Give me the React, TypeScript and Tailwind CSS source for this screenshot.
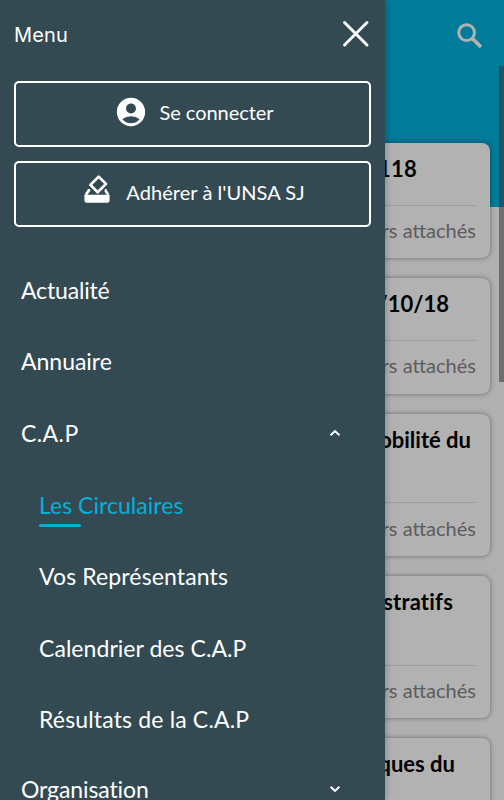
import { MdAccountCircle } from "react-icons/md";

type Card = { title: string; height: string; titleStyle: string };
type Item = { label: string; tracking: string };

const cards: Card[] = [
  { title: "118", height: "h-[115.5px]", titleStyle: "mr-[59px] tracking-[0.2px]" },
  { title: "04/10/18", height: "h-[115.5px]", titleStyle: "mr-[27px]" },
  { title: "mobilité du", height: "h-[142px]", titleStyle: "mr-[5px]" },
  { title: "administratifs", height: "h-[142px]", titleStyle: "mr-[23px] tracking-[0.2px]" },
  { title: "techniques du", height: "h-[142px]", titleStyle: "mr-[21px]" },
];

const topItems: Item[] = [
  { label: "Actualité", tracking: "tracking-[-0.17px]" },
  { label: "Annuaire", tracking: "tracking-[-0.02px]" },
];

const capItems: Item[] = [
  { label: "Les Circulaires", tracking: "tracking-[0.03px]" },
  { label: "Vos Représentants", tracking: "tracking-[0.13px]" },
  { label: "Calendrier des C.A.P", tracking: "tracking-[0.05px]" },
  { label: "Résultats de la C.A.P", tracking: "tracking-[0.16px]" },
];

function BallotIcon() {
  return (
    <svg viewBox="0 0 26 30" className="h-[30px] w-[26px] shrink-0" fill="none" aria-hidden="true">
      <path d="M14.7 2.6 22 9.9 13.7 18.2 6.4 10.9Z" stroke="white" strokeWidth="2.7" strokeLinejoin="round" />
      <path d="M6.2 16.4H4.8L1.9 20.8M20.8 16.4h.6l2.7 4.4" stroke="white" strokeWidth="2.7" />
      <path d="M0.4 20.8h25.2v5.6a2.4 2.4 0 0 1-2.4 2.4H2.8a2.4 2.4 0 0 1-2.4-2.4Z" fill="white" />
    </svg>
  );
}

function SearchIcon() {
  return (
    <svg viewBox="0 0 28 28" className="h-7 w-7" fill="none" stroke="white" aria-hidden="true">
      <circle cx="10.6" cy="10.6" r="7.9" strokeWidth="3" />
      <path d="m16.4 16.4 8.6 8.6" strokeWidth="3.6" />
    </svg>
  );
}

function Caret({ up = false }: { up?: boolean }) {
  return (
    <svg viewBox="0 0 12 8" className={`h-2 w-3 ${up ? "rotate-180" : ""}`} fill="none" aria-hidden="true">
      <path d="m1.6 1.7 4.4 4.2 4.4-4.2" stroke="white" strokeWidth="1.9" />
    </svg>
  );
}

function CircularCard({ title, height, titleStyle }: Card) {
  return (
    <article className={`flex shrink-0 flex-col rounded-lg bg-white px-3.5 pt-3 shadow-[0_0_5px_rgba(0,0,0,0.4)] ${height}`}>
      <h2 className={`text-right text-[22px] leading-7 font-bold whitespace-nowrap text-black ${titleStyle}`}>{title}</h2>
      <p className="mt-auto flex h-[53.5px] items-center justify-end border-t border-[#e4e4e4] pb-1 text-[20px] text-[#858585]">
        fichiers attachés
      </p>
    </article>
  );
}

function Drawer() {
  return (
    <aside className="absolute inset-y-0 left-0 w-[385px] overflow-hidden bg-[#344a53] text-white shadow-[0_0_8px_rgba(0,0,0,0.3)]">
      <header className="flex h-[81px] items-start justify-between pt-5 pr-[15px] pl-3.5">
        <span className="font-['Inter'] text-[20px] leading-[30px] tracking-[0.15px]">Menu</span>
        <button aria-label="Fermer">
          <svg viewBox="0 0 28 28" className="h-7 w-7" fill="none" aria-hidden="true">
            <path d="m2.5 2.5 22.5 22.5M25 2.5 2.5 25" stroke="white" strokeWidth="2.9" strokeLinecap="round" />
          </svg>
        </button>
      </header>

      <div className="flex flex-col gap-3.5 px-3.5 text-[20px]">
        <button className="flex h-[66px] w-[357px] items-center justify-center gap-3 rounded-[5px] border-2 border-white pb-1">
          <MdAccountCircle className="ml-0.5 h-[34px] w-[34px]" />
          <span className="tracking-[-0.05px]">Se connecter</span>
        </button>
        <button className="flex h-[66px] w-[357px] items-center justify-center gap-4 rounded-[5px] border-2 border-white pb-1 pl-1">
          <span className="-mt-1.5">
            <BallotIcon />
          </span>
          <span className="tracking-[0.06px]">Adhérer à l'UNSA SJ</span>
        </button>
      </div>

      <nav className="mt-[27.7px] pl-[21px] text-[23px]">
        {topItems.map((item) => (
          <div key={item.label} className={`flex h-[71.3px] items-center ${item.tracking}`}>
            {item.label}
          </div>
        ))}
        <div className="flex h-[71.3px] items-center justify-between pr-11">
          <span className="tracking-[0.4px]">C.A.P</span>
          <Caret up />
        </div>
        <ul className="mt-px pl-[18px]">
          {capItems.map((item, i) => (
            <li key={item.label} className={`relative flex h-[71.3px] items-center ${item.tracking} ${i === 0 ? "text-[#00b1db]" : ""}`}>
              {item.label}
              {i === 0 && <span className="absolute bottom-[13.5px] left-0 h-[3px] w-[42px] rounded-full bg-[#00b1db]" />}
            </li>
          ))}
        </ul>
        <div className="flex h-[71.3px] items-center justify-between pr-11 pb-[3px]">
          <span className="tracking-[-0.1px]">Organisation</span>
          <Caret />
        </div>
      </nav>
    </aside>
  );
}

export default function App() {
  return (
    <div className="relative h-[800px] w-[504px] overflow-hidden bg-[#fcfcfc] font-['Lato',sans-serif]">
      <header className="flex h-[207px] items-start justify-end bg-[#00b1db] pt-[22px] pr-5">
        <SearchIcon />
      </header>
      <main className="relative -mt-[64.5px] flex flex-col gap-[20.2px] px-3.5">
        {cards.map((card) => (
          <CircularCard key={card.title} {...card} />
        ))}
      </main>

      {/* dimmed page behind the drawer */}
      <div className="absolute inset-0 bg-black/30" />
      <div className="absolute top-[66px] right-0 h-[316px] w-[5.5px] bg-[#383835]/55" />
      <Drawer />
    </div>
  );
}
